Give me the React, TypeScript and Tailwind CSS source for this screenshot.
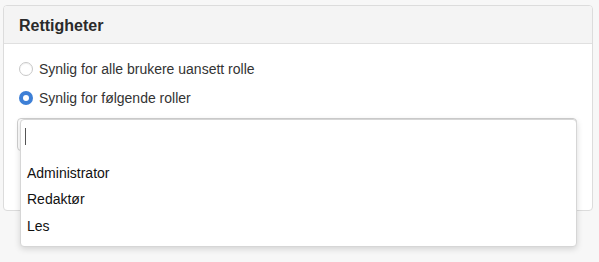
import React from "react";

export default function App() {
  return (
    <div
      className="relative w-[599px] h-[262px] overflow-hidden bg-[#f7f7f7] pt-[5px] pl-[3px] pr-[6px] text-[#333]"
      style={{ fontFamily: '"Liberation Sans", Arial, sans-serif' }}
    >
      <div className="h-[206px] rounded-[4px] border border-[#dcdcdc] bg-white overflow-hidden">
        <div className="h-[38px] flex items-center px-[15px] pt-[2px] bg-[#f4f4f4] border-b border-[#e0e0e0]">
          <span className="text-[16px] font-bold text-[#2a2a2a]">Rettigheter</span>
        </div>
        <div className="px-[15px] pt-[14px]">
          <label className="flex items-center gap-[6px] h-[22px] text-[14px]">
            <span className="w-[14px] h-[14px] rounded-full border border-[#c8c8c8] bg-white shadow-[inset_0_1px_1px_rgba(0,0,0,0.06)]" />
            <span>Synlig for alle brukere uansett rolle</span>
          </label>
          <label className="flex items-center gap-[6px] h-[22px] mt-[7px] text-[14px]">
            <span className="w-[14px] h-[14px] rounded-full bg-[#3d7fd6] flex items-center justify-center">
              <span className="w-[6px] h-[6px] rounded-full bg-white" />
            </span>
            <span>Synlig for følgende roller</span>
          </label>
          <div className="mt-[9px] -ml-[2px] h-[33px] rounded-[4px] border border-[#d0d0d0] bg-white" />
        </div>
      </div>

      <div className="absolute left-[20px] top-[119px] w-[557px] h-[128px] rounded-[4px] bg-white border border-[#d6d6d6] shadow-[0_2px_6px_rgba(0,0,0,0.15)] text-[14px] text-[#111]">
        <div className="h-[33px] flex items-center pl-[4px]">
          <span className="w-[1px] h-[17px] bg-[#555]" />
        </div>
        <div className="pl-[6px] pt-[7px]">
          <div className="h-[26px] flex items-center">Administrator</div>
          <div className="h-[27px] flex items-center">Redaktør</div>
          <div className="h-[26px] flex items-center">Les</div>
        </div>
      </div>
    </div>
  );
}
